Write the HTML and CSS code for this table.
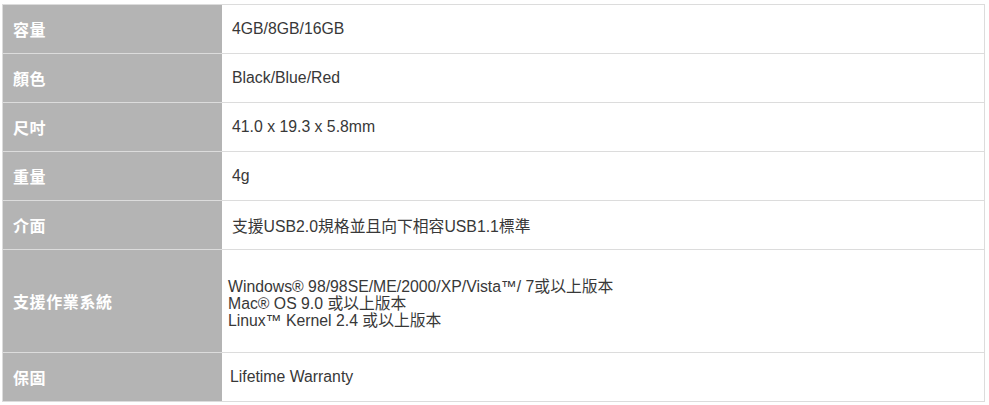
FILE: index.html
```html
<!DOCTYPE html>
<html lang="zh-Hant">
<head>
    <meta charset="UTF-8">
    <meta name="viewport" content="width=device-width, initial-scale=1.0">
    <title>產品規格</title>
    <link rel="stylesheet" href="styles.css">
</head>
<body>
    <table class="spec-table">
        <tr>
            <th>容量</th>
            <td>4GB/8GB/16GB</td>
        </tr>
        <tr>
            <th>顏色</th>
            <td>Black/Blue/Red</td>
        </tr>
        <tr>
            <th>尺吋</th>
            <td>41.0 x 19.3 x 5.8mm</td>
        </tr>
        <tr>
            <th>重量</th>
            <td>4g</td>
        </tr>
        <tr>
            <th>介面</th>
            <td>支援USB2.0規格並且向下相容USB1.1標準</td>
        </tr>
        <tr class="tall">
            <th>支援作業系統</th>
            <td class="os">Windows® 98/98SE/ME/2000/XP/Vista™/ 7或以上版本<br>Mac® OS 9.0 或以上版本<br>Linux™ Kernel 2.4 或以上版本</td>
        </tr>
        <tr>
            <th>保固</th>
            <td class="last">Lifetime Warranty</td>
        </tr>
    </table>
</body>
</html>
```

FILE: styles.css
```css
body {
    margin: 0;
    background: #fff;
    font-family: "Liberation Sans", Arial, "Noto Sans CJK TC", sans-serif;
}
.spec-table {
    width: 983px;
    margin: 4px 0 0 2px;
    border-collapse: collapse;
    border: 1px solid #dcdcdc;
}
.spec-table th,
.spec-table td {
    height: 48px;
    padding: 0;
    border-bottom: 1px solid #dcdcdc;
    vertical-align: middle;
}
.spec-table th {
    width: 209px;
    padding-left: 10px;
    background-color: #b4b4b4;
    color: #fff;
    font-family: "Noto Sans CJK TC", sans-serif;
    font-size: 16px;
    font-weight: bold;
    letter-spacing: 0.6px;
    text-align: left;
}
.spec-table td {
    padding-left: 10px;
    color: #383838;
    font-size: 15.8px;
}
.spec-table .tall th,
.spec-table .tall td {
    height: 102px;
}
.spec-table .tall td.os {
    height: 98px;
    padding-left: 6px;
    padding-top: 4px;
    line-height: 17px;
    font-size: 15.8px;
}
.spec-table td.last {
    padding-left: 8px;
}
```
